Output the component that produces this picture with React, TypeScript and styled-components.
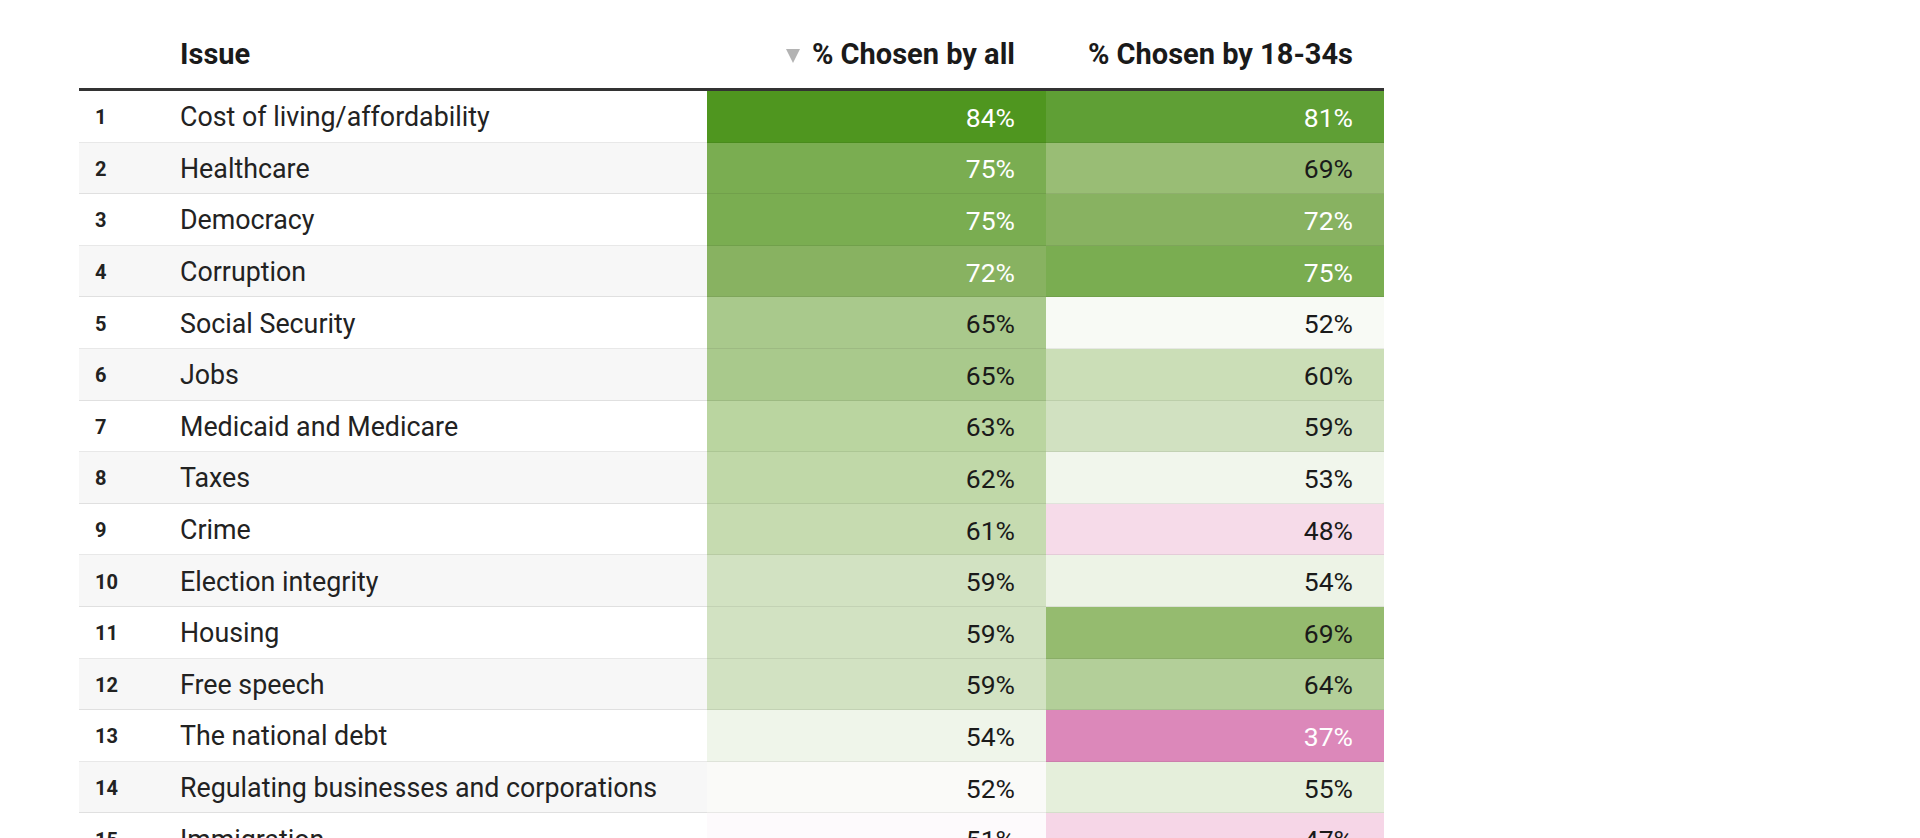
import React from "react";
import styled, { createGlobalStyle } from "styled-components";

type Cell = { value: number; bg: string; light?: boolean };
type Issue = { rank: number; name: string; all: Cell; young: Cell };

const issues: Issue[] = [
  { rank: 1, name: "Cost of living/affordability", all: { value: 84, bg: "#4f961f", light: true }, young: { value: 81, bg: "#5f9f35", light: true } },
  { rank: 2, name: "Healthcare", all: { value: 75, bg: "#7aad51", light: true }, young: { value: 69, bg: "#99bd75" } },
  { rank: 3, name: "Democracy", all: { value: 75, bg: "#7aad51", light: true }, young: { value: 72, bg: "#88b261", light: true } },
  { rank: 4, name: "Corruption", all: { value: 72, bg: "#88b261", light: true }, young: { value: 75, bg: "#7aad51", light: true } },
  { rank: 5, name: "Social Security", all: { value: 65, bg: "#a9c98c" }, young: { value: 52, bg: "#f8faf5" } },
  { rank: 6, name: "Jobs", all: { value: 65, bg: "#a9c98c" }, young: { value: 60, bg: "#cbdeb7" } },
  { rank: 7, name: "Medicaid and Medicare", all: { value: 63, bg: "#bad5a0" }, young: { value: 59, bg: "#d1e1c1" } },
  { rank: 8, name: "Taxes", all: { value: 62, bg: "#c0d8a8" }, young: { value: 53, bg: "#f1f6ec" } },
  { rank: 9, name: "Crime", all: { value: 61, bg: "#c6dbb0" }, young: { value: 48, bg: "#f6dbe9" } },
  { rank: 10, name: "Election integrity", all: { value: 59, bg: "#d2e2c2" }, young: { value: 54, bg: "#edf3e6" } },
  { rank: 11, name: "Housing", all: { value: 59, bg: "#d2e2c2" }, young: { value: 69, bg: "#95bb6f" } },
  { rank: 12, name: "Free speech", all: { value: 59, bg: "#d2e2c2" }, young: { value: 64, bg: "#b3cf99" } },
  { rank: 13, name: "The national debt", all: { value: 54, bg: "#eff5ea" }, young: { value: 37, bg: "#dc88ba", light: true } },
  { rank: 14, name: "Regulating businesses and corporations", all: { value: 52, bg: "#fafaf8" }, young: { value: 55, bg: "#e5efdb" } },
  { rank: 15, name: "Immigration", all: { value: 51, bg: "#fdfafc" }, young: { value: 47, bg: "#f6d6e7" } },
];

const GlobalStyle = createGlobalStyle`
  html, body {
    margin: 0;
    padding: 0;
    background: #ffffff;
    overflow: hidden;
  }
  body {
    font-family: Roboto, "Noto Sans", Arial, sans-serif;
    color: #222222;
  }
`;

const Page = styled.div`
  padding-left: 79px;
`;

const Table = styled.div`
  width: 1305px;
`;

const columns = "101px 527px 339px 338px";

const HeaderRow = styled.div`
  display: grid;
  grid-template-columns: ${columns};
  height: 91px;
  box-sizing: border-box;
  border-bottom: 3.5px solid #333333;
`;

const HeaderCell = styled.div<{ $align?: "left" | "right" }>`
  display: flex;
  align-items: center;
  justify-content: ${(p) => (p.$align === "right" ? "flex-end" : "flex-start")};
  padding: 37px ${(p) => (p.$align === "right" ? "31px" : "0")} 0 0;
  height: 34px;
  font-size: 29px;
  font-weight: 700;
  color: #1a1a1a;
  white-space: nowrap;
`;

const SortArrow = styled.span`
  width: 0;
  height: 0;
  border-left: 7.5px solid transparent;
  border-right: 7.5px solid transparent;
  border-top: 14px solid #b3b3b3;
  margin-right: 12px;
  margin-top: 4px;
`;

const Row = styled.div<{ $striped: boolean }>`
  display: grid;
  grid-template-columns: ${columns};
  height: 51.6px;
  background: ${(p) => (p.$striped ? "#f7f7f7" : "#ffffff")};
`;

const RankCell = styled.div`
  display: flex;
  align-items: center;
  padding: 2px 0 0 16px;
  font-size: 20px;
  font-weight: 700;
  color: #222222;
  border-bottom: 1px solid rgba(0, 0, 0, 0.09);
`;

const NameCell = styled.div`
  display: flex;
  align-items: center;
  padding-top: 2px;
  font-size: 26.8px;
  color: #222222;
  white-space: nowrap;
  border-bottom: 1px solid rgba(0, 0, 0, 0.09);
`;

const ValueCell = styled.div<{ $bg: string; $light?: boolean }>`
  display: flex;
  align-items: center;
  justify-content: flex-end;
  padding: 2px 31px 0 0;
  font-size: 26.5px;
  background: ${(p) => p.$bg};
  color: ${(p) => (p.$light ? "#ffffff" : "#1a1a1a")};
  border-bottom: 1px solid rgba(0, 0, 0, 0.07);
`;

export default function App() {
  return (
    <>
      <GlobalStyle />
      <Page>
        <Table>
          <HeaderRow>
            <HeaderCell />
            <HeaderCell>Issue</HeaderCell>
            <HeaderCell $align="right">
              <SortArrow />% Chosen by all
            </HeaderCell>
            <HeaderCell $align="right">% Chosen by 18-34s</HeaderCell>
          </HeaderRow>
          {issues.map((issue, i) => (
            <Row key={issue.rank} $striped={i % 2 === 1}>
              <RankCell>{issue.rank}</RankCell>
              <NameCell>{issue.name}</NameCell>
              <ValueCell $bg={issue.all.bg} $light={issue.all.light}>
                {issue.all.value}%
              </ValueCell>
              <ValueCell $bg={issue.young.bg} $light={issue.young.light}>
                {issue.young.value}%
              </ValueCell>
            </Row>
          ))}
        </Table>
      </Page>
    </>
  );
}
